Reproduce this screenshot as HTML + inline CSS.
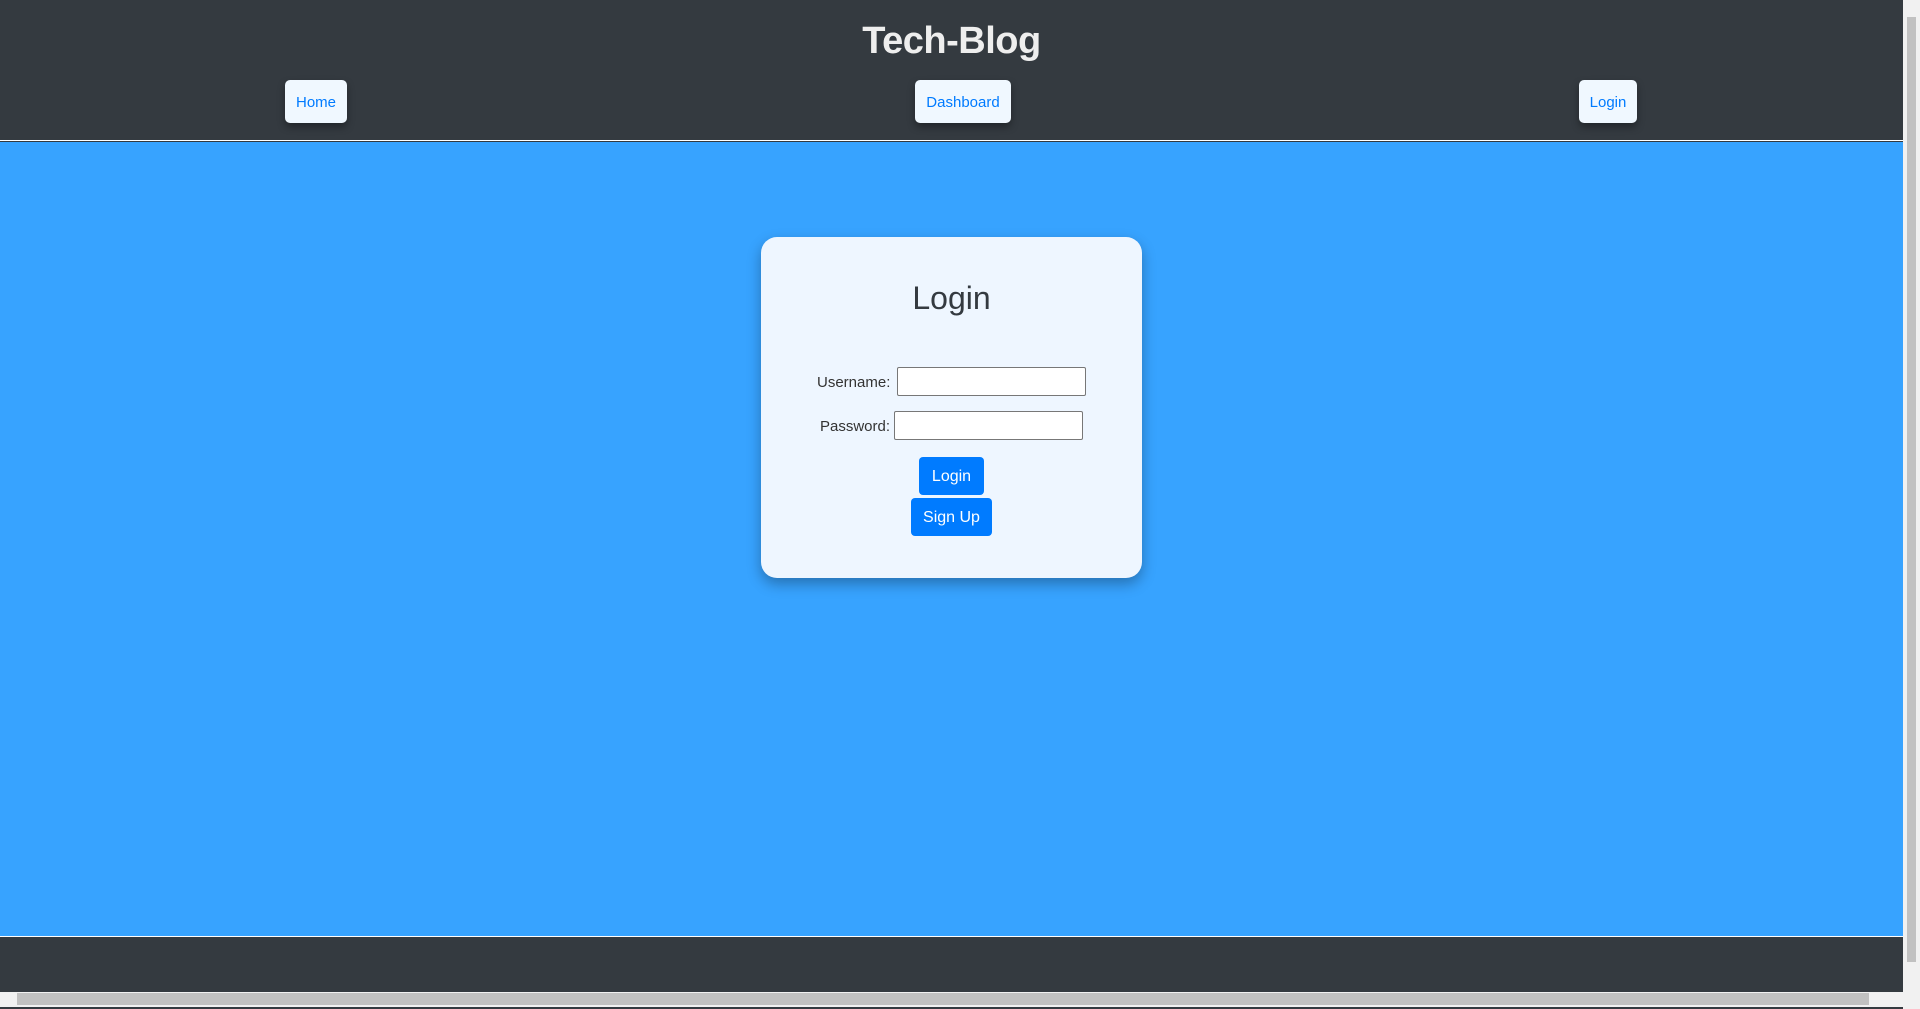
<!DOCTYPE html>
<html><head><meta charset="utf-8"><style>
*{box-sizing:border-box;margin:0;padding:0}
html,body{width:1920px;height:1009px;overflow:hidden;background:#343a40;font-family:"Liberation Sans","DejaVu Sans",sans-serif}
.hdr{position:absolute;left:0;top:0;width:1903px;height:141px;background:#343a40;border-bottom:1px solid #fff}
.title{position:absolute;left:0;width:1903px;top:20px;text-align:center;color:#eee;font-size:38px;font-weight:bold;letter-spacing:-0.5px}
.nb{position:absolute;top:80px;height:43px;background:#f0f8ff;color:#007bff;border-radius:5px;font-size:15px;line-height:45px;text-align:center;box-shadow:0 4px 8px rgba(0,0,0,.35)}
.main{position:absolute;left:0;top:142px;width:1903px;height:795px;background:#37a3ff;border-bottom:1px solid #fff}
.card{position:absolute;left:761px;top:95px;width:381px;height:341px;background:#eef6ff;border-radius:16px;box-shadow:0 6px 14px rgba(0,0,0,.3)}
.card h2{position:absolute;top:43px;width:100%;text-align:center;font-size:32px;font-weight:normal;color:#343a40}
.lbl{position:absolute;font-size:15px;color:#333}
.in{position:absolute;width:189px;height:29px;background:#fff;border:1px solid #777;border-radius:2px}
.btn{position:absolute;height:38px;background:#007bff;color:#fff;border-radius:4px;font-size:16px;line-height:40px;text-align:center}
.vs{position:absolute;left:1903px;top:0;width:17px;height:1009px;background:#f1f1f1}
.vs i{position:absolute;left:4px;top:17px;width:9px;height:945px;background:#c1c1c1}
.hs{position:absolute;left:0;top:992px;width:1903px;height:15px;background:#f1f1f1}
.hs i{position:absolute;left:17px;top:1px;width:1852px;height:12px;background:#c1c1c1}
</style></head><body>
<div class="hdr">
<div class="title">Tech-Blog</div>
<div class="nb" style="left:285px;width:62px">Home</div>
<div class="nb" style="left:915px;width:96px">Dashboard</div>
<div class="nb" style="left:1579px;width:58px">Login</div>
</div>
<div class="main">
<div class="card">
<h2>Login</h2>
<div class="lbl" style="left:56px;top:137px">Username:</div>
<div class="in" style="left:136px;top:130px"></div>
<div class="lbl" style="left:59px;top:181px">Password:</div>
<div class="in" style="left:133px;top:174px"></div>
<div class="btn" style="left:158px;top:220px;width:65px">Login</div>
<div class="btn" style="left:150px;top:261px;width:81px">Sign Up</div>
</div>
</div>
<div class="vs"><i></i></div>
<div class="hs"><i></i></div>
</body></html>
